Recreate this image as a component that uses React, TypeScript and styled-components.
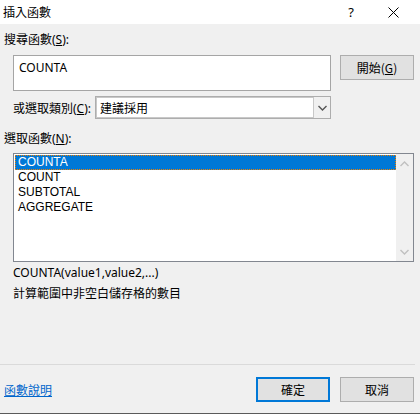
import React from "react";
import styled, { createGlobalStyle } from "styled-components";

const Global = createGlobalStyle`
  html, body { margin: 0; padding: 0; background: #f0f0f0; }
  body { font-family: "Noto Sans", "Noto Sans CJK TC", sans-serif; font-size: 12px; color: #000; }
  * { box-sizing: border-box; }
`;

const Dialog = styled.div`
  width: 420px;
  height: 414px;
  display: flex;
  flex-direction: column;
  background: #f0f0f0;
  border-bottom: 1px solid #5a5a5a;
  overflow: hidden;
`;

const TitleBar = styled.div`
  height: 24px;
  background: #fff;
  display: flex;
  align-items: center;
  padding-left: 3px;
  font-size: 12px;
  line-height: 1;
`;

const Title = styled.span`
  flex: 1;
  font-family: "Noto Sans CJK TC", sans-serif;
`;

const TitleBtn = styled.span<{ $w: number }>`
  width: ${(p) => p.$w}px;
  height: 24px;
  display: flex;
  align-items: center;
  justify-content: center;
  font-size: 13px;
`;

const Body = styled.div`
  flex: 1;
  display: flex;
  flex-direction: column;
`;

const Label = styled.div<{ $mt: number; $ml?: number }>`
  margin-top: ${(p) => p.$mt}px;
  margin-left: ${(p) => p.$ml ?? 4}px;
  height: 16px;
  line-height: 16px;
  font-size: 12px;
  white-space: nowrap;
`;

const U = styled.span`
  text-decoration: underline;
`;

const SearchRow = styled.div`
  display: flex;
  margin-top: 7px;
  padding-left: 13px;
  gap: 9px;
  align-items: flex-start;
`;

const SearchBox = styled.div`
  width: 318px;
  height: 36px;
  background: #fff;
  border: 1px solid #a5a5a5;
  padding: 4px 5px;
  font-size: 12px;
  line-height: 15px;
`;

const Button = styled.div<{ $primary?: boolean }>`
  width: 74px;
  height: 25px;
  background: #e1e1e1;
  border: ${(p) => (p.$primary ? "2px solid #0078d7" : "1px solid #adadad")};
  display: flex;
  align-items: center;
  justify-content: center;
  font-size: 12px;
  font-family: "Noto Sans CJK TC", sans-serif;
`;

const CategoryRow = styled.div`
  display: flex;
  align-items: center;
  margin-top: 5px;
  padding-left: 13px;
  height: 23px;
`;

const CatLabel = styled.span`
  width: 82px;
  white-space: nowrap;
  font-size: 12px;
`;

const Select = styled.div`
  width: 236px;
  height: 23px;
  background: #fff;
  border: 1px solid #adadad;
  box-shadow: inset 0 0 0 1px #c8c8c8;
  display: flex;
  align-items: stretch;
`;

const SelectText = styled.span`
  flex: 1;
  display: flex;
  align-items: center;
  padding-left: 4px;
  font-family: "Noto Sans CJK TC", sans-serif;
`;

const SelectArrow = styled.span`
  width: 17px;
  border-left: 1px solid #c8c8c8;
  background: #f0f0f0;
  display: flex;
  align-items: center;
  justify-content: center;
`;

const ListBox = styled.div`
  margin: 6px 6px 0 13px;
  height: 109px;
  border: 1px solid #828790;
  background: #fff;
  display: flex;
`;

const ListItems = styled.div`
  flex: 1;
  padding: 1px 0 0 1px;
`;

const Item = styled.div<{ $sel?: boolean }>`
  height: 15px;
  line-height: 15px;
  padding-left: 3px;
  font-size: 12px;
  font-family: "Liberation Sans", sans-serif;
  background: ${(p) => (p.$sel ? "#0078d7" : "transparent")};
  color: ${(p) => (p.$sel ? "#fff" : "#000")};
  outline: ${(p) => (p.$sel ? "1px dotted #f08000" : "none")};
  outline-offset: -1px;
`;

const ScrollBar = styled.div`
  width: 17px;
  background: #f0f0f0;
  display: flex;
  flex-direction: column;
  justify-content: space-between;
  align-items: center;
  padding: 7px 0 6px;
`;

const Desc = styled.div<{ $mt: number; $cjk?: boolean }>`
  margin: ${(p) => p.$mt}px 0 0 13px;
  height: 16px;
  line-height: 16px;
  font-size: 12px;
  font-family: ${(p) => (p.$cjk ? '"Noto Sans CJK TC", sans-serif' : '"Noto Sans", sans-serif')};
`;

const Spacer = styled.div`
  flex: 1;
`;

const Separator = styled.div`
  height: 1px;
  background: #dadada;
  margin-right: 5px;
`;

const Footer = styled.div`
  height: 48px;
  display: flex;
  align-items: center;
  padding: 0 6px 0 4px;
  gap: 10px;
`;

const Link = styled.a`
  flex: 1;
  color: #0066cc;
  text-decoration: underline;
  font-size: 12px;
  font-family: "Noto Sans CJK TC", sans-serif;
  cursor: pointer;
`;

const Chevron = ({ up, color = "#333" }: { up?: boolean; color?: string }) => (
  <svg width="9" height="6" viewBox="0 0 9 6">
    <path
      d={up ? "M0.5 5 L4.5 1 L8.5 5" : "M0.5 1 L4.5 5 L8.5 1"}
      fill="none"
      stroke={color}
      strokeWidth="1.4"
    />
  </svg>
);

export default function App() {
  return (
    <>
      <Global />
      <Dialog>
        <TitleBar>
          <Title>插入函數</Title>
          <TitleBtn $w={30}>?</TitleBtn>
          <TitleBtn $w={54}>
            <svg width="11" height="11" viewBox="0 0 11 11">
              <path d="M0.5 0.5 L10.5 10.5 M10.5 0.5 L0.5 10.5" stroke="#000" strokeWidth="1" />
            </svg>
          </TitleBtn>
        </TitleBar>
        <Body>
          <Label $mt={8}>
            搜尋函數(<U>S</U>):
          </Label>
          <SearchRow>
            <SearchBox>COUNTA</SearchBox>
            <Button>
              開始(<U>G</U>)
            </Button>
          </SearchRow>
          <CategoryRow>
            <CatLabel>
              或選取類別(<U>C</U>):
            </CatLabel>
            <Select>
              <SelectText>建議採用</SelectText>
              <SelectArrow>
                <Chevron color="#555" />
              </SelectArrow>
            </Select>
          </CategoryRow>
          <Label $mt={12}>
            選取函數(<U>N</U>):
          </Label>
          <ListBox>
            <ListItems>
              <Item $sel>COUNTA</Item>
              <Item>COUNT</Item>
              <Item>SUBTOTAL</Item>
              <Item>AGGREGATE</Item>
            </ListItems>
            <ScrollBar>
              <Chevron up color="#c0c0c0" />
              <Chevron color="#c0c0c0" />
            </ScrollBar>
          </ListBox>
          <Desc $mt={3}>COUNTA(value1,value2,...)</Desc>
          <Desc $mt={4} $cjk>
            計算範圍中非空白儲存格的數目
          </Desc>
          <Spacer />
          <Separator />
          <Footer>
            <Link>函數說明</Link>
            <Button $primary>確定</Button>
            <Button>取消</Button>
          </Footer>
        </Body>
      </Dialog>
    </>
  );
}
